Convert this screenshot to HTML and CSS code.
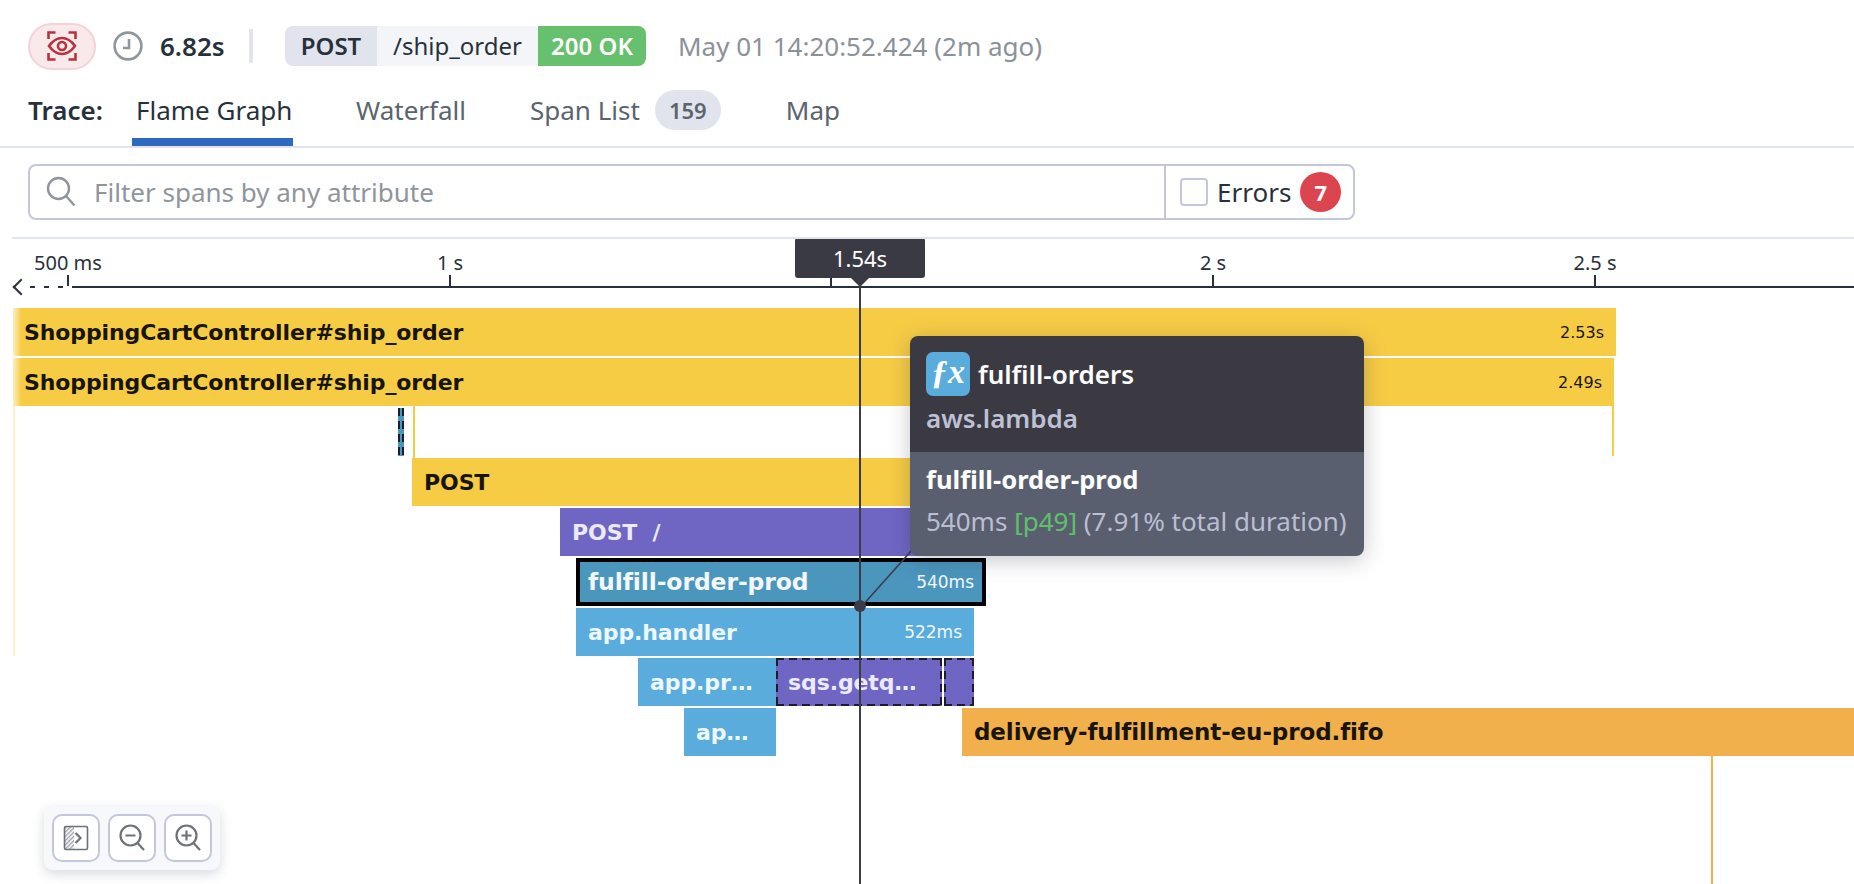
FILE: index.html
```html
<!DOCTYPE html>
<html lang="en">
<head>
<meta charset="utf-8">
<title>Trace</title>
<link rel="stylesheet" href="styles.css">
</head>
<body>
<header class="summary">
  <div class="eye-pill">
    <svg width="30" height="30" viewBox="0 0 30 30" fill="none" stroke="#b8323c" stroke-width="2.6">
      <path d="M1.5 8V1.5H8.500M21.500 1.500H28.500V8M28.500 22V28.500H21.500M8.500 28.500H1.500V22"/>
      <path d="M2 15C6 9.500 10 7 15 7s9 2.500 13 8c-4 5.500-8 8-13 8S6 20.500 2 15z"/>
      <circle cx="15" cy="15" r="4"/>
    </svg>
  </div>
  <svg class="clock" width="30" height="30" viewBox="0 0 30 30" fill="none" stroke="#8f959c" stroke-width="2.6">
    <circle cx="15" cy="15" r="13.4"/>
    <path d="M16 8v9h-6"/>
  </svg>
  <span class="duration">6.82s</span>
  <span class="sep"></span>
  <div class="tag">
    <span class="tag-method">POST</span>
    <span class="tag-path">/ship_order</span>
    <span class="tag-status">200 OK</span>
  </div>
  <span class="date">May 01 14:20:52.424 (2m ago)</span>
</header>

<nav class="tabs">
  <span class="tabs-title">Trace:</span>
  <a class="tab tab-active">Flame Graph</a>
  <a class="tab tab-waterfall">Waterfall</a>
  <a class="tab tab-spans">Span List<span class="count">159</span></a>
  <a class="tab tab-map">Map</a>
</nav>

<div class="filter-row">
  <div class="filter">
    <div class="filter-input">
      <svg width="32" height="34" viewBox="0 0 32 34" fill="none" stroke="#8f959c" stroke-width="2.4">
        <circle cx="13.5" cy="13.5" r="10.5"/>
        <path d="M21 21l8.5 9.5"/>
      </svg>
      <span class="placeholder">Filter spans by any attribute</span>
    </div>
    <div class="filter-errors">
      <span class="checkbox"></span>
      <span class="errors-label">Errors</span>
      <span class="errors-count">7</span>
    </div>
  </div>
</div>

<main class="chart">
  <div class="ruler">
    <div class="axis-out"><span class="axis-arrow"></span><span class="axis-dash"></span></div>
    <div class="axis-line"></div>
    <span class="tick" style="left:67px"><b>500 ms</b></span>
    <span class="tick" style="left:449px"><b>1 s</b></span>
    <span class="tick" style="left:830px"></span>
    <span class="tick" style="left:1212px"><b>2 s</b></span>
    <span class="tick" style="left:1594px"><b>2.5 s</b></span>
  </div>

  <div class="rows">
    <div class="row">
      <div class="bar yellow root" style="left:13px;width:1603px"><span class="name">ShoppingCartController#ship_order</span><span class="time">2.53s</span></div>
    </div>
    <div class="row">
      <div class="bar yellow root" style="left:13px;width:1601px"><span class="name">ShoppingCartController#ship_order</span><span class="time">2.49s</span></div>
    </div>
    <div class="row">
      <div class="bar blue-dark" style="left:398px;width:6px"></div>
    </div>
    <div class="row">
      <div class="bar yellow" style="left:412px;width:700px"><span class="name">POST</span></div>
    </div>
    <div class="row">
      <div class="bar purple" style="left:560px;width:500px"><span class="name">POST&nbsp; /</span></div>
    </div>
    <div class="row">
      <div class="bar selected" style="left:576px;width:410px"><span class="name">fulfill-order-prod</span><span class="time">540ms</span></div>
    </div>
    <div class="row">
      <div class="bar blue" style="left:576px;width:398px"><span class="name">app.handler</span><span class="time">522ms</span></div>
    </div>
    <div class="row">
      <div class="bar blue" style="left:638px;width:138px"><span class="name">app.pr…</span></div>
      <div class="bar purple dashed" style="left:776px;width:166px"><span class="name">sqs.getq…</span></div>
      <div class="bar purple dashed" style="left:944px;width:30px"></div>
    </div>
    <div class="row">
      <div class="bar blue" style="left:684px;width:92px"><span class="name">ap…</span></div>
      <div class="bar orange" style="left:962px;width:892px"><span class="name">delivery-fulfillment-eu-prod.fifo</span></div>
    </div>
    <div class="rail rail-left"></div>
    <div class="rail rail-post"></div>
    <div class="rail rail-end"></div>
    <div class="rail rail-orange"></div>
  </div>

  <div class="cursor"></div>
  <div class="cursor-dot"></div>
  <svg class="connector" width="54" height="58" viewBox="0 0 54 58"><path d="M52 0L2 56" stroke="#3c3c48" stroke-width="1.6" fill="none"/></svg>
  <div class="cursor-label">1.54s</div>

  <aside class="tip">
    <div class="tip-top">
      <div class="tip-service"><span class="fx">ƒx</span><span>fulfill-orders</span></div>
      <div class="tip-kind">aws.lambda</div>
    </div>
    <div class="tip-bottom">
      <div class="tip-name">fulfill-order-prod</div>
      <div class="tip-meta">540ms <span class="tip-pct">[p49]</span> (7.91% total duration)</div>
    </div>
  </aside>

  <div class="zoom">
    <button class="zoom-btn" type="button">
      <svg width="26" height="26" viewBox="0 0 26 26" fill="none">
        <defs><pattern id="hatch" width="3" height="3" patternUnits="userSpaceOnUse" patternTransform="rotate(45)"><rect width="1.4" height="3" fill="#9aa0a8"/></pattern></defs>
        <rect x="2" y="2" width="9" height="22" fill="url(#hatch)"/>
        <rect x="1.5" y="1.5" width="23" height="23" rx="1.5" stroke="#6c7278" stroke-width="1.6"/>
        <path d="M12.500 8l5 5-5 5" stroke="#6c7278" stroke-width="2.2"/>
      </svg>
    </button>
    <button class="zoom-btn" type="button">
      <svg width="26" height="28" viewBox="0 0 26 28" fill="none" stroke="#6c7278" stroke-width="2.2">
        <circle cx="11.500" cy="11.500" r="10"/><path d="M6.500 11.500h10M18.500 19l6.500 7"/>
      </svg>
    </button>
    <button class="zoom-btn" type="button">
      <svg width="26" height="28" viewBox="0 0 26 28" fill="none" stroke="#6c7278" stroke-width="2.2">
        <circle cx="11.500" cy="11.500" r="10"/><path d="M6.500 11.500h10M11.500 6.500v10M18.500 19l6.500 7"/>
      </svg>
    </button>
  </div>
</main>
</body>
</html>
```
FILE: styles.css
```css
* { box-sizing: border-box; }
html, body { height: 100%; }
body {
  margin: 0;
  width: 1854px;
  height: 884px;
  overflow: hidden;
  background: #fff;
  font-family: "Noto Sans", sans-serif;
  font-size: 26px;
  color: #27313b;
}

/* summary row */
.summary {
  display: flex;
  align-items: center;
  height: 46px;
  margin-top: 23px;
  padding-left: 28px;
}
.eye-pill {
  display: flex;
  align-items: center;
  justify-content: center;
  width: 68px;
  height: 47px;
  background: #f9e9eb;
  border: 2px solid #f3d3d7;
  border-radius: 24px;
}
.clock { margin-left: 17px; }
.duration { margin-left: 17px; font-weight: 600; width: 64px; }
.sep { width: 4px; height: 34px; margin-left: 25px; background: #e2e5ee; }
.tag {
  display: flex;
  height: 40px;
  margin-left: 32px;
  border-radius: 8px;
  overflow: hidden;
  font-size: 24px;
  line-height: 40px;
}
.tag-method { width: 92px; text-align: center; background: #e1e4ed; font-weight: 600; }
.tag-path { width: 161px; text-align: center; background: #f3f5f9; }
.tag-status { width: 108px; text-align: center; background: #67c06d; color: #fff; font-weight: 600; }
.date { margin-left: 32px; color: #8b9198; }

/* tabs */
.tabs {
  display: flex;
  align-items: flex-start;
  height: 79px;
  padding: 24px 0 0 28px;
  border-bottom: 2px solid #e0e4ee;
  line-height: 34px;
}
.tabs-title { font-weight: 600; width: 104px; }
.tab { display: flex; align-items: center; height: 53px; padding: 0 4px 19px; color: #5a646e; position: relative; white-space: nowrap; }
.tab-active { color: #27313b; width: 161px; border-bottom: 8px solid #2c6abf; padding-bottom: 11px; }
.tab-waterfall { margin-left: 59px; }
.tab-spans { margin-left: 56px; }
.tab-map { margin-left: 57px; }
.count {
  display: inline-block;
  width: 66px;
  height: 40px;
  margin-left: 15px;
  border-radius: 20px;
  background: #e1e4ed;
  text-align: center;
  line-height: 40px;
  font-size: 22px;
  font-weight: 600;
}

/* filter */
.filter-row {
  margin-left: 12px;
  padding: 16px 0 17px 16px;
  border-bottom: 2px solid #e0e4ee;
}
.filter {
  display: flex;
  width: 1327px;
  height: 56px;
  border: 2px solid #c2c7dd;
  border-radius: 8px;
}
.filter-input {
  display: flex;
  align-items: center;
  width: 1136px;
  padding-left: 15px;
  border-right: 2px solid #c2c7dd;
}
.placeholder { margin-left: 17px; color: #8f959c; }
.filter-errors { display: flex; align-items: center; padding-left: 14px; }
.checkbox {
  width: 28px;
  height: 28px;
  border: 2px solid #c2c7dd;
  border-radius: 4px;
  background: #fff;
}
.errors-label { margin-left: 9px; color: #27313b; }
.errors-count {
  width: 41px;
  height: 40px;
  margin-left: 9px;
  border-radius: 50%;
  background: #dc4550;
  color: #fff;
  font-weight: 700;
  font-size: 22px;
  line-height: 40px;
  text-align: center;
}

/* chart */
.chart { position: relative; height: 645px; overflow: hidden; }
.ruler { position: relative; height: 69px; }
.axis-line { position: absolute; left: 72px; right: 0; top: 47px; height: 2px; background: #27313b; }
.axis-out { position: absolute; left: 14px; top: 40px; width: 52px; height: 16px; }
.axis-arrow {
  position: absolute;
  left: 1px;
  top: 2px;
  width: 12px;
  height: 12px;
  border-left: 2px solid #27313b;
  border-bottom: 2px solid #27313b;
  transform: rotate(45deg);
}
.axis-dash {
  position: absolute;
  left: 16px;
  width: 36px;
  top: 7px;
  height: 2px;
  background: repeating-linear-gradient(90deg, #27313b 0 5px, transparent 5px 14px);
}
.tick { position: absolute; top: 36px; width: 2px; height: 11px; background: #27313b; }
.tick b {
  position: absolute;
  bottom: 11px;
  left: 1px;
  transform: translateX(-50%);
  white-space: nowrap;
  font-weight: 400;
  font-size: 20px;
  line-height: 24px;
  color: #27313b;
}

.rows { position: relative; }
.row { position: relative; height: 50px; }
.bar {
  position: absolute;
  top: 0;
  height: 48px;
  display: flex;
  align-items: center;
  justify-content: space-between;
  padding: 0 12px;
  white-space: nowrap;
  overflow: hidden;
}
.name { font-family: "DejaVu Sans", sans-serif; font-weight: 700; font-size: 22px; letter-spacing: -.1px; }
.time { font-family: "DejaVu Sans", sans-serif; font-size: 17px; }
.selected .name { font-size: 23.5px; }
.orange .name { font-size: 23px; }
.yellow { background: #f7cc45; color: #17150d; }
.yellow .time { font-size: 16px; }
.root { background: linear-gradient(90deg, #fdf0c6 0, #f7cc45 8px); padding-left: 11px; }
.orange { background: #f2b04c; color: #17150d; }
.purple { background: #6f66c4; color: #eceaf8; }
.blue { background: #59acdb; color: #eef7fc; }
.blue-dark {
  padding: 0;
  background:
    repeating-linear-gradient(180deg, #1c1c2a 0 8px, transparent 8px 13px) left top / 2px 100% no-repeat,
    repeating-linear-gradient(180deg, #1c1c2a 0 8px, transparent 8px 13px) right top / 2px 100% no-repeat,
    #4b96bd;
}
.selected { background: #4b96bd; color: #f2f8fb; border: 4px solid #000; padding: 0 8px; }
.dashed {
  background:
    repeating-linear-gradient(90deg, #1c1c2a 0 8px, transparent 8px 13px) left top / 100% 2px no-repeat,
    repeating-linear-gradient(90deg, #1c1c2a 0 8px, transparent 8px 13px) left bottom / 100% 2px no-repeat,
    repeating-linear-gradient(180deg, #1c1c2a 0 8px, transparent 8px 13px) left top / 2px 100% no-repeat,
    repeating-linear-gradient(180deg, #1c1c2a 0 8px, transparent 8px 13px) right top / 2px 100% no-repeat,
    #6f66c4;
}

.rail { position: absolute; width: 2px; }
.rail-left { left: 13px; top: 98px; height: 250px; background: #fdf0c6; }
.rail-post { left: 413px; top: 98px; height: 52px; background: #f7cc45; }
.rail-end { left: 1612px; top: 98px; height: 50px; background: #f7cc45; }
.rail-orange { left: 1711px; top: 448px; height: 200px; background: #f2b04c; }

.cursor { position: absolute; left: 859px; top: 47px; bottom: 0; width: 2px; background: #3c3c48; }
.cursor-dot { position: absolute; left: 854px; top: 361px; width: 12px; height: 12px; border-radius: 50%; background: #3c3c48; }
.connector { position: absolute; left: 860px; top: 311px; }
.cursor-label {
  position: absolute;
  left: 795px;
  top: -1px;
  width: 130px;
  height: 40px;
  border-radius: 3px;
  background: #3a3a44;
  color: #fff;
  font-size: 22px;
  line-height: 40px;
  text-align: center;
}
.cursor-label::after {
  content: "";
  position: absolute;
  left: 56px;
  top: 40px;
  border: 9px solid transparent;
  border-bottom: 0;
  border-top-color: #3a3a44;
}

/* tooltip */
.tip {
  position: absolute;
  left: 910px;
  top: 97px;
  width: 454px;
  height: 220px;
  border-radius: 8px;
  overflow: hidden;
  box-shadow: 0 4px 22px rgba(30, 30, 50, .25);
}
.tip-top { height: 116px; background: #3b3a42; padding: 16px 16px 0; }
.tip-bottom { height: 104px; background: #5a5f70; padding: 11px 16px 0; }
.tip-service { display: flex; align-items: center; gap: 8px; height: 44px; color: #fff; font-weight: 600; }
.fx {
  width: 44px;
  height: 44px;
  border-radius: 7px;
  background: #59acdb;
  color: #fff;
  font-family: "Liberation Serif", serif;
  font-style: italic;
  font-weight: 700;
  font-size: 34px;
  line-height: 40px;
  text-align: center;
}
.tip-kind { margin-top: 5px; color: #bcc1d6; font-weight: 600; line-height: 34px; }
.tip-name { color: #fff; font-weight: 700; font-size: 25.6px; line-height: 34px; }
.tip-meta { margin-top: 7px; color: #b9bed2; line-height: 34px; }
.tip-pct { color: #60c06a; }

/* zoom */
.zoom {
  position: absolute;
  left: 44px;
  top: 567px;
  display: flex;
  gap: 8px;
  padding: 8px;
  background: #f6f8fc;
  border-radius: 9px;
  box-shadow: 0 4px 12px rgba(40, 50, 80, .18);
}
.zoom-btn {
  display: flex;
  align-items: center;
  justify-content: center;
  width: 48px;
  height: 48px;
  padding: 0;
  border: 2px solid #c2c7dd;
  border-radius: 10px;
  background: #fff;
}
```
